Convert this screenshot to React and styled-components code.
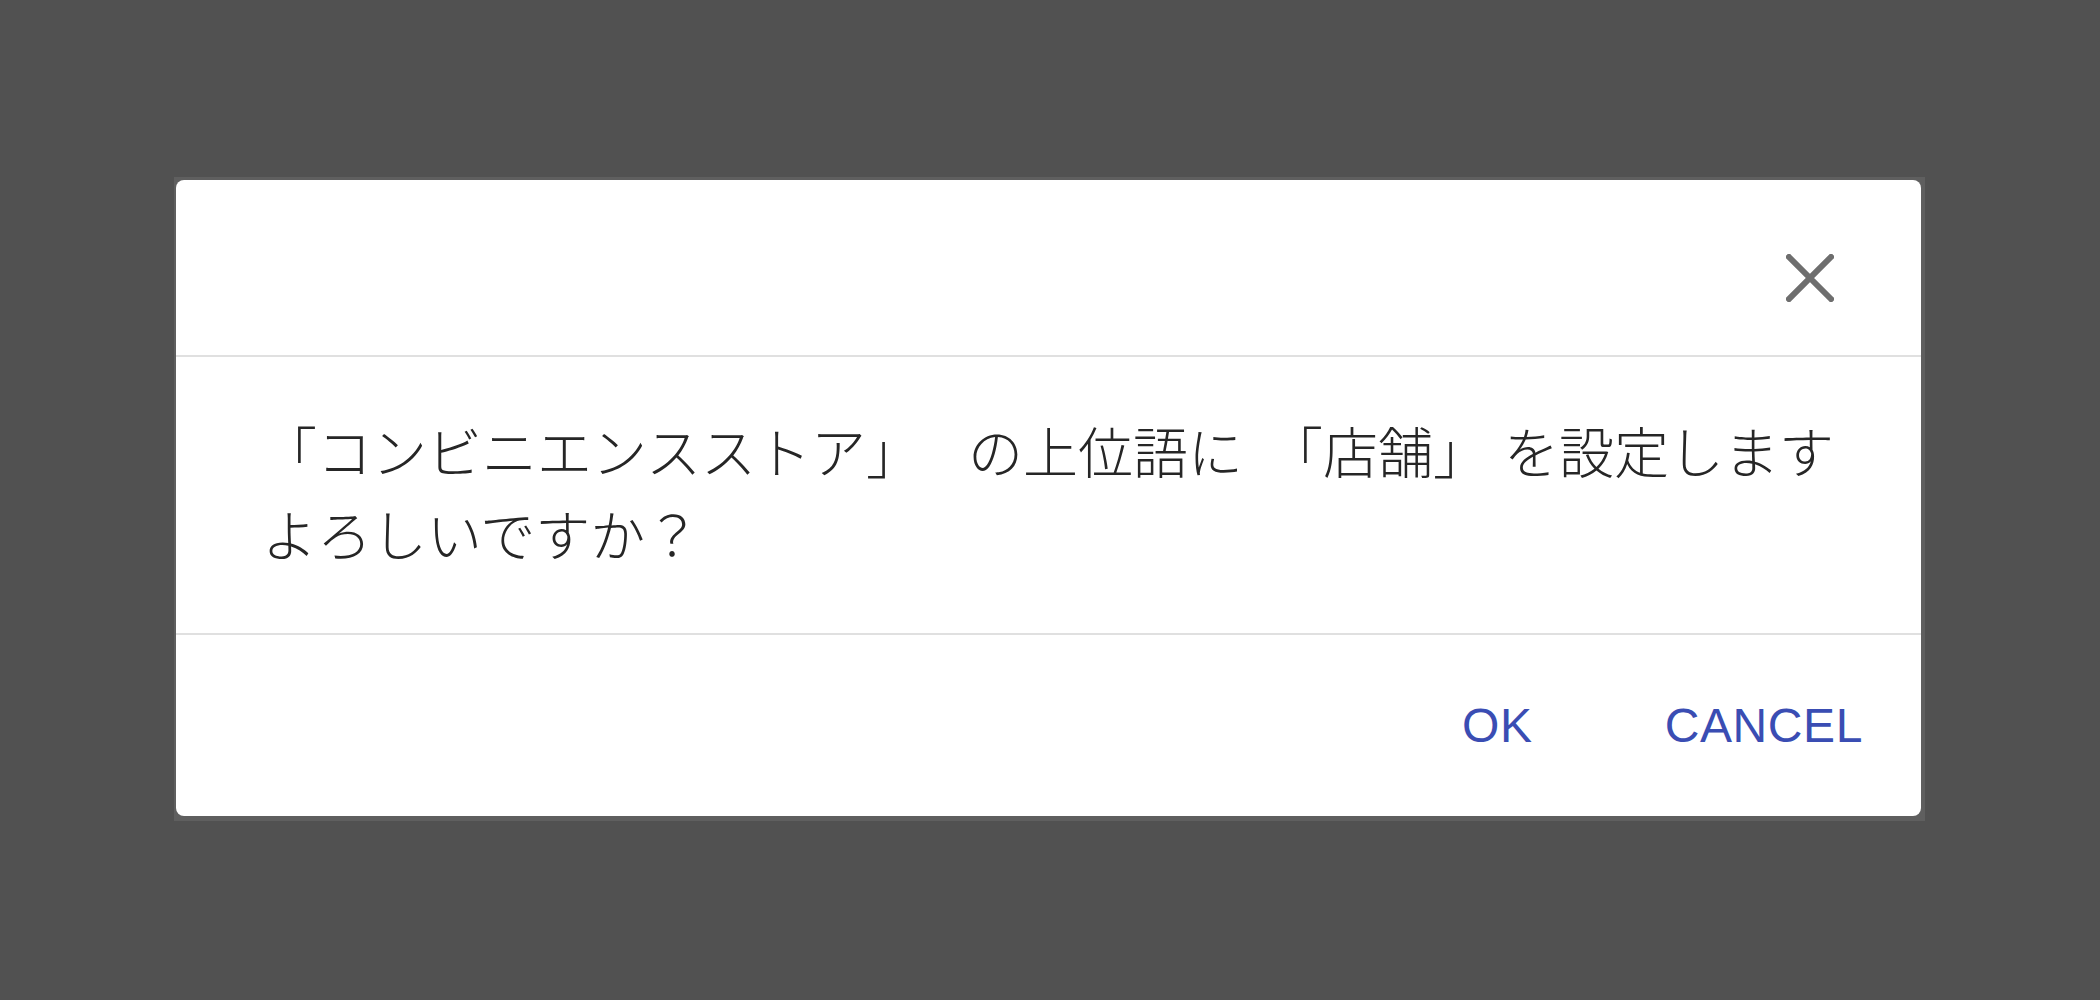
import React from 'react';
import styled, { createGlobalStyle } from 'styled-components';

const GlobalStyle = createGlobalStyle`
  html, body {
    margin: 0;
    padding: 0;
    background-color: #515151;
  }
  #root {
    min-height: 1000px;
  }
`;

const Page = styled.div`
  height: 1000px;
  padding: 177px 0 0 174px;
  box-sizing: border-box;
  background-color: #515151;
`;

// the page panel that sits under the dialog, dimmed by the backdrop
const Panel = styled.div`
  width: 1751px;
  box-sizing: border-box;
  padding: 3px 4px 5px 2px;
  background-color: #5f5f5f;
`;

const Dialog = styled.div`
  display: flex;
  flex-direction: column;
  background-color: #ffffff;
  border-radius: 8px;
  overflow: hidden;
`;

const Header = styled.div`
  height: 175px;
  display: flex;
  justify-content: flex-end;
  align-items: center;
  padding-right: 86px;
  border-bottom: 2px solid #e0e0e0;
`;

const CloseButton = styled.button`
  width: 50px;
  height: 50px;
  padding: 0;
  margin-top: 20px;
  border: none;
  background: none;
  cursor: pointer;
  display: flex;
  align-items: center;
  justify-content: center;
`;

const Content = styled.div`
  padding: 51px 40px 59px 86px;
  font-family: "Noto Sans CJK JP", "Noto Sans", sans-serif;
  font-weight: 300;
  font-size: 55px;
  line-height: 83px;
  color: #262626;
  border-bottom: 2px solid #e0e0e0;
`;

// quoted term inside the message
const Term = styled.span`
  margin-left: ${(p) => p.$ml || 0}px;
  margin-right: ${(p) => p.$mr || 0}px;
`;

const Footer = styled.div`
  height: 181px;
  display: flex;
  justify-content: flex-end;
  align-items: center;
  gap: 132px;
  padding-right: 58px;
`;

const TextButton = styled.button`
  padding: 0;
  border: none;
  background: none;
  cursor: pointer;
  font-family: "Liberation Sans", Arial, sans-serif;
  font-size: 48px;
  line-height: 1;
  letter-spacing: 0.6px;
  color: #3a4db3;
  text-transform: uppercase;
`;

const CloseIcon = () => (
  <svg width="48" height="48" viewBox="0 0 48 48">
    <path
      d="M3 3 L45 45 M45 3 L3 45"
      stroke="#6e6e6e"
      strokeWidth="6"
      strokeLinecap="square"
      fill="none"
    />
  </svg>
);

const App = () => {
  return (
    <>
      <GlobalStyle />
      <Page>
        <Panel>
          <Dialog>
            <Header>
              <CloseButton aria-label="close">
                <CloseIcon />
              </CloseButton>
            </Header>
            <Content>
              <Term $mr={47}>「コンビニエンスストア」</Term>
              の上位語に
              <Term $ml={25} $mr={16}>「店舗」</Term>
              を設定します
              <br />
              よろしいですか？
            </Content>
            <Footer>
              <TextButton>OK</TextButton>
              <TextButton>Cancel</TextButton>
            </Footer>
          </Dialog>
        </Panel>
      </Page>
    </>
  );
};

export default App;
